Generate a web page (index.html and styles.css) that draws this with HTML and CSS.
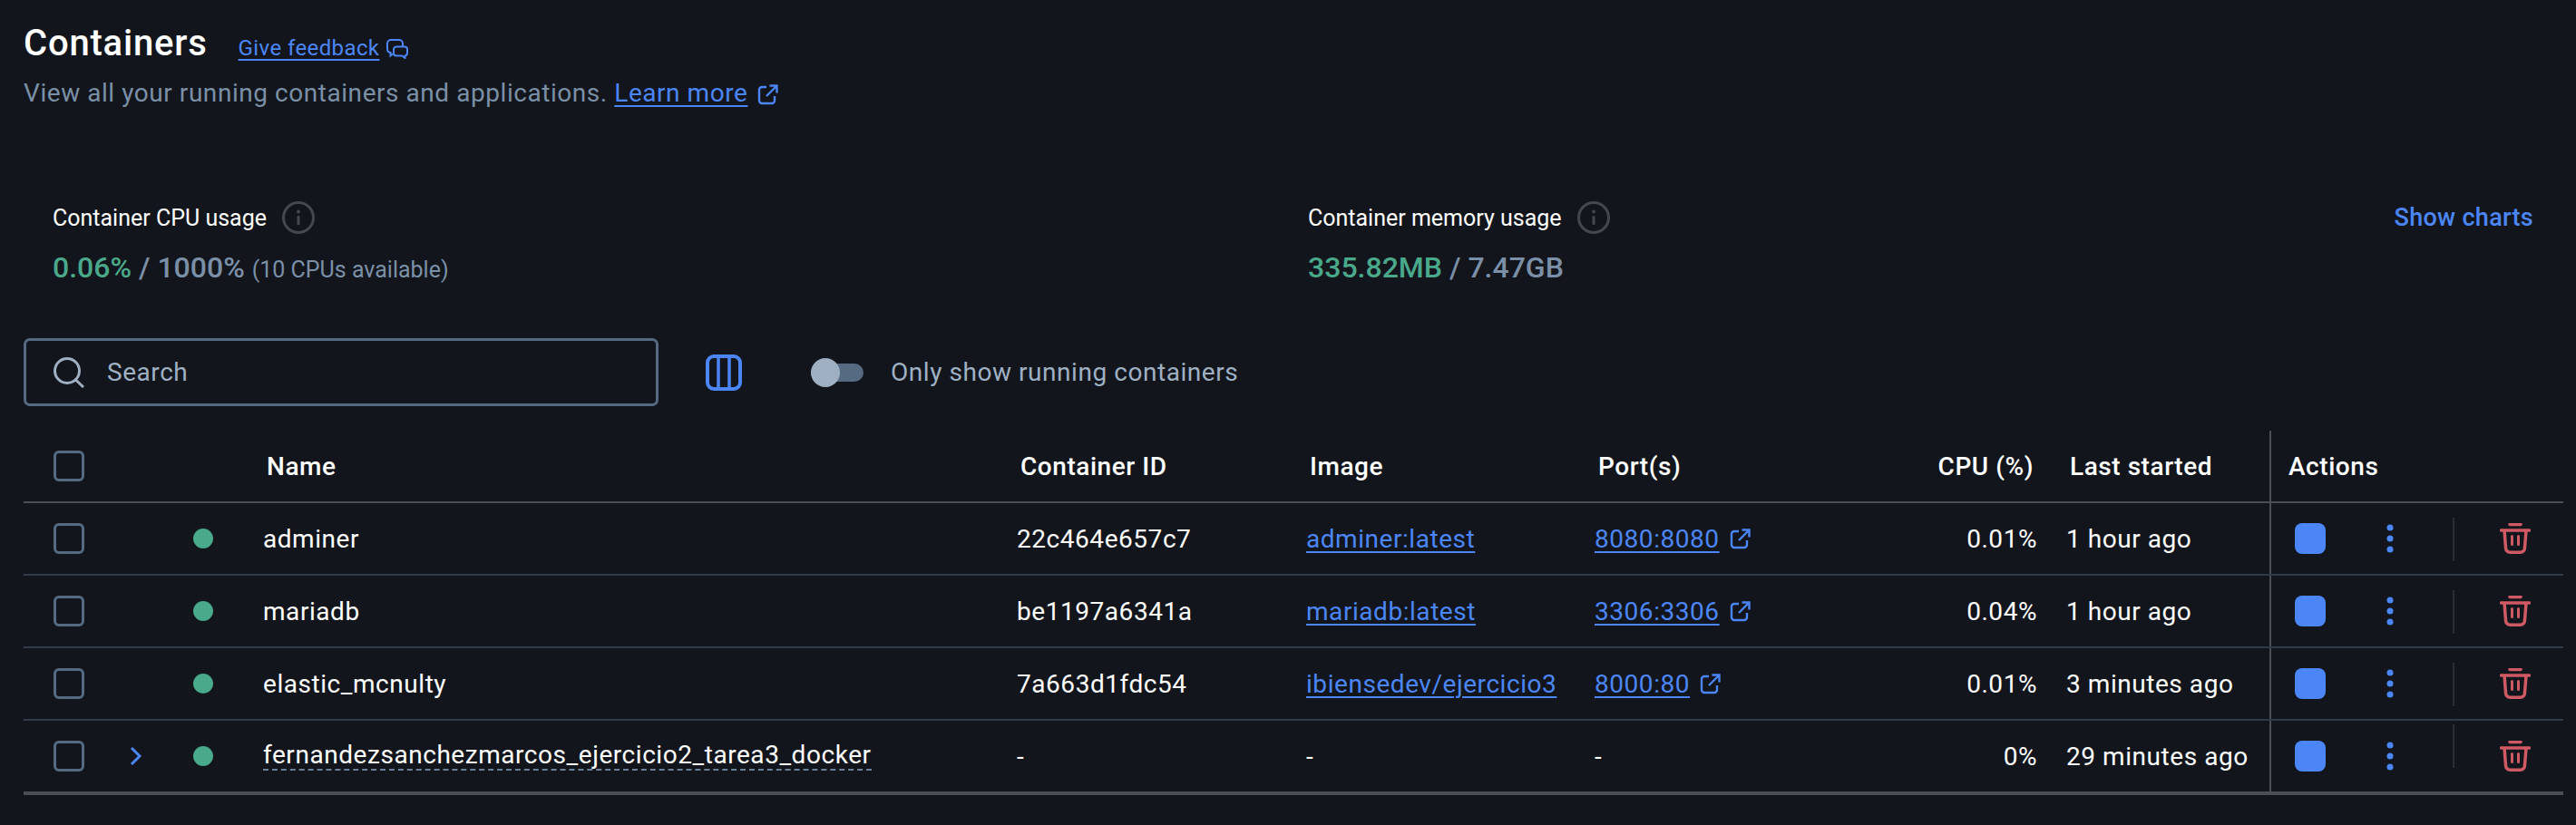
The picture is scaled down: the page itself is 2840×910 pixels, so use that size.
FILE: index.html
```html
<!DOCTYPE html>
<html lang="en">

<head>
    <meta charset="UTF-8" />
    <meta name="viewport" content="width=device-width, initial-scale=1.0" />
    <title>Containers</title>
    <link rel="stylesheet" href="styles.css">
</head>

<body>
    <!-- Shared icons -->
    <svg class="sprites" width="0" height="0">
        <symbol id="ext" viewBox="0 0 24 24">
            <path d="M10 4H5a3 3 0 0 0-3 3v12a3 3 0 0 0 3 3h11a3 3 0 0 0 3-3v-5" fill="none" stroke="currentColor" stroke-width="2.4" />
            <path d="M10 14 21 3M13.500 2.500H21.500V10.500" fill="none" stroke="currentColor" stroke-width="2.4" />
        </symbol>
        <symbol id="info" viewBox="0 0 36 36">
            <circle cx="18" cy="18" r="16.5" fill="none" stroke="currentColor" stroke-width="3" />
            <rect x="16.5" y="16" width="3" height="10" rx="1" fill="currentColor" />
            <circle cx="18" cy="11.5" r="1.9" fill="currentColor" />
        </symbol>
        <symbol id="trash" viewBox="0 0 34 34">
            <path d="M11 1.500H23" fill="none" stroke="currentColor" stroke-width="3.500" stroke-linecap="round" />
            <path d="M1.500 8H32.500" fill="none" stroke="currentColor" stroke-width="3.500" stroke-linecap="round" />
            <path d="M5 8 6.500 27a5 5 0 0 0 5 5.250H22.500a5 5 0 0 0 5-5.250L29 8" fill="none" stroke="currentColor" stroke-width="3.500" />
            <path d="M13.500 14.500V23.500M20.500 14.500V23.500" fill="none" stroke="currentColor" stroke-width="3" stroke-linecap="round" />
        </symbol>
        <symbol id="kebab" viewBox="0 0 8 32">
            <circle cx="4" cy="4" r="3.500" fill="currentColor" />
            <circle cx="4" cy="16" r="3.500" fill="currentColor" />
            <circle cx="4" cy="28" r="3.500" fill="currentColor" />
        </symbol>
    </svg>

    <header class="page-head">
        <div class="title-line">
            <h1>Containers</h1>
            <a class="link feedback" href="#">Give feedback</a>
            <svg class="icon-feedback" viewBox="0 0 24 22">
                <path d="M7 16.500 4.500 18.500V15A3.500 3.500 0 0 1 1 11.500V5A4 4 0 0 1 5 1h9a4 4 0 0 1 4 4v3" fill="none" stroke="currentColor" stroke-width="2" />
                <path d="M11 8.500h9a3 3 0 0 1 3 3v4a3 3 0 0 1-2.500 3V21L17 18.500H11a3 3 0 0 1-3-3v-4a3 3 0 0 1 3-3Z" fill="none" stroke="currentColor" stroke-width="2" />
            </svg>
        </div>
        <p class="intro">View all your running containers and applications. <a class="link" href="#">Learn more</a><svg class="icon-ext"><use href="#ext" /></svg></p>
    </header>

    <!-- CPU / memory -->
    <section class="stats">
        <div class="stat stat-cpu">
            <div class="stat-label">Container CPU usage <svg class="icon-info"><use href="#info" /></svg></div>
            <div class="stat-value"><span class="used">0.06%</span> / 1000% <small>(10 CPUs available)</small></div>
        </div>
        <div class="stat stat-mem">
            <div class="stat-label">Container memory usage <svg class="icon-info"><use href="#info" /></svg></div>
            <div class="stat-value"><span class="used">335.82MB</span> / 7.47GB</div>
        </div>
        <a class="show-charts" href="#">Show charts</a>
    </section>

    <section class="toolbar">
        <div class="search">
            <svg class="icon-search" viewBox="0 0 34 34">
                <circle cx="15" cy="15" r="13.500" fill="none" stroke="currentColor" stroke-width="3" />
                <path d="M24.500 25 33 33" fill="none" stroke="currentColor" stroke-width="3" />
            </svg>
            <span>Search</span>
        </div>
        <svg class="icon-columns" viewBox="0 0 40 40">
            <rect x="2" y="2" width="36" height="36" rx="7" fill="none" stroke="currentColor" stroke-width="4" />
            <path d="M14 2V38M26 2V38" fill="none" stroke="currentColor" stroke-width="3.500" />
        </svg>
        <div class="toggle"><span class="knob"></span></div>
        <span class="toggle-label">Only show running containers</span>
    </section>

    <main class="table">
        <div class="row head">
            <div class="cell c-sel"><span class="check"></span></div>
            <div class="cell c-exp"></div>
            <div class="cell c-dot"></div>
            <div class="cell c-name">Name</div>
            <div class="cell c-id">Container ID</div>
            <div class="cell c-img">Image</div>
            <div class="cell c-port">Port(s)</div>
            <div class="cell c-cpu">CPU (%)</div>
            <div class="cell c-last">Last started</div>
            <div class="cell c-act">Actions</div>
        </div>

        <div class="row">
            <div class="cell c-sel"><span class="check"></span></div>
            <div class="cell c-exp"></div>
            <div class="cell c-dot"><span class="dot"></span></div>
            <div class="cell c-name">adminer</div>
            <div class="cell c-id">22c464e657c7</div>
            <div class="cell c-img"><a class="link" href="#">adminer:latest</a></div>
            <div class="cell c-port"><a class="link" href="#">8080:8080</a><svg class="icon-ext"><use href="#ext" /></svg></div>
            <div class="cell c-cpu">0.01%</div>
            <div class="cell c-last">1 hour ago</div>
            <div class="cell c-act">
                <span class="stop"></span>
                <svg class="icon-kebab"><use href="#kebab" /></svg>
                <span class="sep"></span>
                <svg class="icon-trash"><use href="#trash" /></svg>
            </div>
        </div>

        <div class="row">
            <div class="cell c-sel"><span class="check"></span></div>
            <div class="cell c-exp"></div>
            <div class="cell c-dot"><span class="dot"></span></div>
            <div class="cell c-name">mariadb</div>
            <div class="cell c-id">be1197a6341a</div>
            <div class="cell c-img"><a class="link" href="#">mariadb:latest</a></div>
            <div class="cell c-port"><a class="link" href="#">3306:3306</a><svg class="icon-ext"><use href="#ext" /></svg></div>
            <div class="cell c-cpu">0.04%</div>
            <div class="cell c-last">1 hour ago</div>
            <div class="cell c-act">
                <span class="stop"></span>
                <svg class="icon-kebab"><use href="#kebab" /></svg>
                <span class="sep"></span>
                <svg class="icon-trash"><use href="#trash" /></svg>
            </div>
        </div>

        <div class="row">
            <div class="cell c-sel"><span class="check"></span></div>
            <div class="cell c-exp"></div>
            <div class="cell c-dot"><span class="dot"></span></div>
            <div class="cell c-name">elastic_mcnulty</div>
            <div class="cell c-id">7a663d1fdc54</div>
            <div class="cell c-img"><a class="link" href="#">ibiensedev/ejercicio3</a></div>
            <div class="cell c-port"><a class="link" href="#">8000:80</a><svg class="icon-ext"><use href="#ext" /></svg></div>
            <div class="cell c-cpu">0.01%</div>
            <div class="cell c-last">3 minutes ago</div>
            <div class="cell c-act">
                <span class="stop"></span>
                <svg class="icon-kebab"><use href="#kebab" /></svg>
                <span class="sep"></span>
                <svg class="icon-trash"><use href="#trash" /></svg>
            </div>
        </div>

        <div class="row last">
            <div class="cell c-sel"><span class="check"></span></div>
            <div class="cell c-exp">
                <svg class="icon-chevron" viewBox="0 0 14 22">
                    <path d="M2 2 11 11 2 20" fill="none" stroke="currentColor" stroke-width="3" />
                </svg>
            </div>
            <div class="cell c-dot"><span class="dot"></span></div>
            <div class="cell c-name"><span class="compose">fernandezsanchezmarcos_ejercicio2_tarea3_docker</span></div>
            <div class="cell c-id">-</div>
            <div class="cell c-img">-</div>
            <div class="cell c-port">-</div>
            <div class="cell c-cpu">0%</div>
            <div class="cell c-last">29 minutes ago</div>
            <div class="cell c-act">
                <span class="stop"></span>
                <svg class="icon-kebab"><use href="#kebab" /></svg>
                <span class="sep"></span>
                <svg class="icon-trash"><use href="#trash" /></svg>
            </div>
        </div>
    </main>
</body>

</html>
```

FILE: styles.css
```css
body {
    margin: 0;
    width: 2840px;
    height: 910px;
    overflow: hidden;
    background: #12161c;
    color: #fff;
    font-family: Roboto, sans-serif;
    font-size: 28px;
    letter-spacing: 0.55px;
}

.sprites {
    display: block;
}

.link {
    color: #4c86f6;
    text-decoration: underline;
    text-decoration-thickness: 2px;
    text-underline-offset: 4px;
}

/* Page title */
.page-head {
    padding: 24px 26px 0;
}

.title-line {
    display: flex;
    align-items: center;
    height: 46px;
}

h1 {
    margin: 0;
    font-size: 40px;
    font-weight: 500;
    letter-spacing: 0.8px;
}

.feedback {
    margin-left: 34px;
    margin-top: 12px;
    font-size: 24px;
    letter-spacing: 0.4px;
}

.icon-feedback {
    width: 24px;
    height: 22px;
    margin-left: 8px;
    margin-top: 14px;
    color: #4c86f6;
}

.intro {
    margin: 13px 0 0;
    line-height: 40px;
    color: #7b8fa6;
}

.icon-ext {
    width: 24px;
    height: 24px;
    margin-left: 11px;
    color: #4c86f6;
    vertical-align: -4px;
}

/* Usage numbers */
.stats {
    display: flex;
    margin-top: 99px;
    padding: 0 47px 0 58px;
}

.stat-cpu {
    width: 1384px;
}

.stat-mem {
    flex: 1;
}

.stat-label {
    display: flex;
    align-items: center;
    height: 36px;
    font-size: 25px;
    letter-spacing: 0;
}

.icon-info {
    width: 36px;
    height: 36px;
    margin-left: 17px;
    color: #44484e;
}

.stat-value {
    margin-top: 17px;
    line-height: 40px;
    font-size: 32px;
    font-weight: 500;
    letter-spacing: 0;
    color: #7b8fa6;
}

.stat-value small {
    font-size: 25px;
    font-weight: 400;
}

.used {
    color: #4aa88b;
}

.show-charts {
    height: 36px;
    line-height: 36px;
    font-size: 27px;
    font-weight: 500;
    letter-spacing: 0.3px;
    color: #4c86f6;
    text-decoration: none;
}

/* Search and filters */
.toolbar {
    display: flex;
    align-items: center;
    margin-top: 55px;
    padding-left: 26px;
}

.search {
    display: flex;
    align-items: center;
    box-sizing: border-box;
    width: 700px;
    height: 75px;
    padding-left: 30px;
    border: 3px solid #566a82;
    border-radius: 7px;
    color: #9fb0c3;
}

.icon-search {
    width: 34px;
    height: 34px;
    margin-right: 25px;
}

.icon-columns {
    width: 40px;
    height: 40px;
    margin-left: 52px;
    color: #4c86f6;
}

.toggle {
    display: flex;
    align-items: center;
    width: 58px;
    height: 20px;
    margin-left: 76px;
    border-radius: 10px;
    background: #566a82;
}

.knob {
    width: 32px;
    height: 32px;
    border-radius: 50%;
    background: #9fb0c3;
}

.toggle-label {
    margin-left: 30px;
    color: #9fb0c3;
}

/* Table */
.table {
    margin: 27px 14px 0 26px;
    border-bottom: 4px solid #4b4e53;
}

.row {
    display: grid;
    grid-template-columns: 100px 48px 100px 831px 319px 318px 358px 162px 240px 324px;
    height: 80px;
    box-sizing: border-box;
    border-bottom: 2px solid #303b49;
}

.row.last {
    border-bottom: 0;
    height: 78px;
}

.row.head {
    border-bottom-color: #4b4e53;
    font-weight: 500;
}

.cell {
    display: flex;
    align-items: center;
    padding: 0 16px;
    white-space: nowrap;
}

.head .cell {
    padding: 0 20px;
}

.row .c-sel {
    padding: 0 0 0 33px;
}

.row .c-exp {
    padding: 0;
    justify-content: center;
}

.row .c-dot {
    padding: 0;
    justify-content: center;
}

.c-cpu {
    justify-content: flex-end;
}

.check {
    box-sizing: border-box;
    width: 34px;
    height: 34px;
    border: 3px solid #566a82;
    border-radius: 6px;
}

.dot {
    width: 22px;
    height: 22px;
    border-radius: 50%;
    background: #4aa88b;
}

.icon-chevron {
    width: 14px;
    height: 22px;
    color: #4c86f6;
}

.compose {
    border-bottom: 2px dashed #6d8098;
    line-height: 30px;
}

.row .c-act {
    padding: 0 0 0 26px;
    border-left: 2px solid #4b4e53;
}

.head .c-act {
    padding-left: 19px;
}

.stop {
    width: 34px;
    height: 34px;
    border-radius: 8px;
    background: #4c86f6;
}

.icon-kebab {
    width: 8px;
    height: 32px;
    margin-left: 67px;
    color: #4c86f6;
}

.sep {
    align-self: flex-start;
    width: 2px;
    height: 48px;
    margin: 16px 0 0 65px;
    background: #2a2e34;
}

.last .sep {
    margin-top: 4px;
}

.icon-trash {
    width: 34px;
    height: 34px;
    margin-left: 50px;
    color: #cf5a64;
}
```
